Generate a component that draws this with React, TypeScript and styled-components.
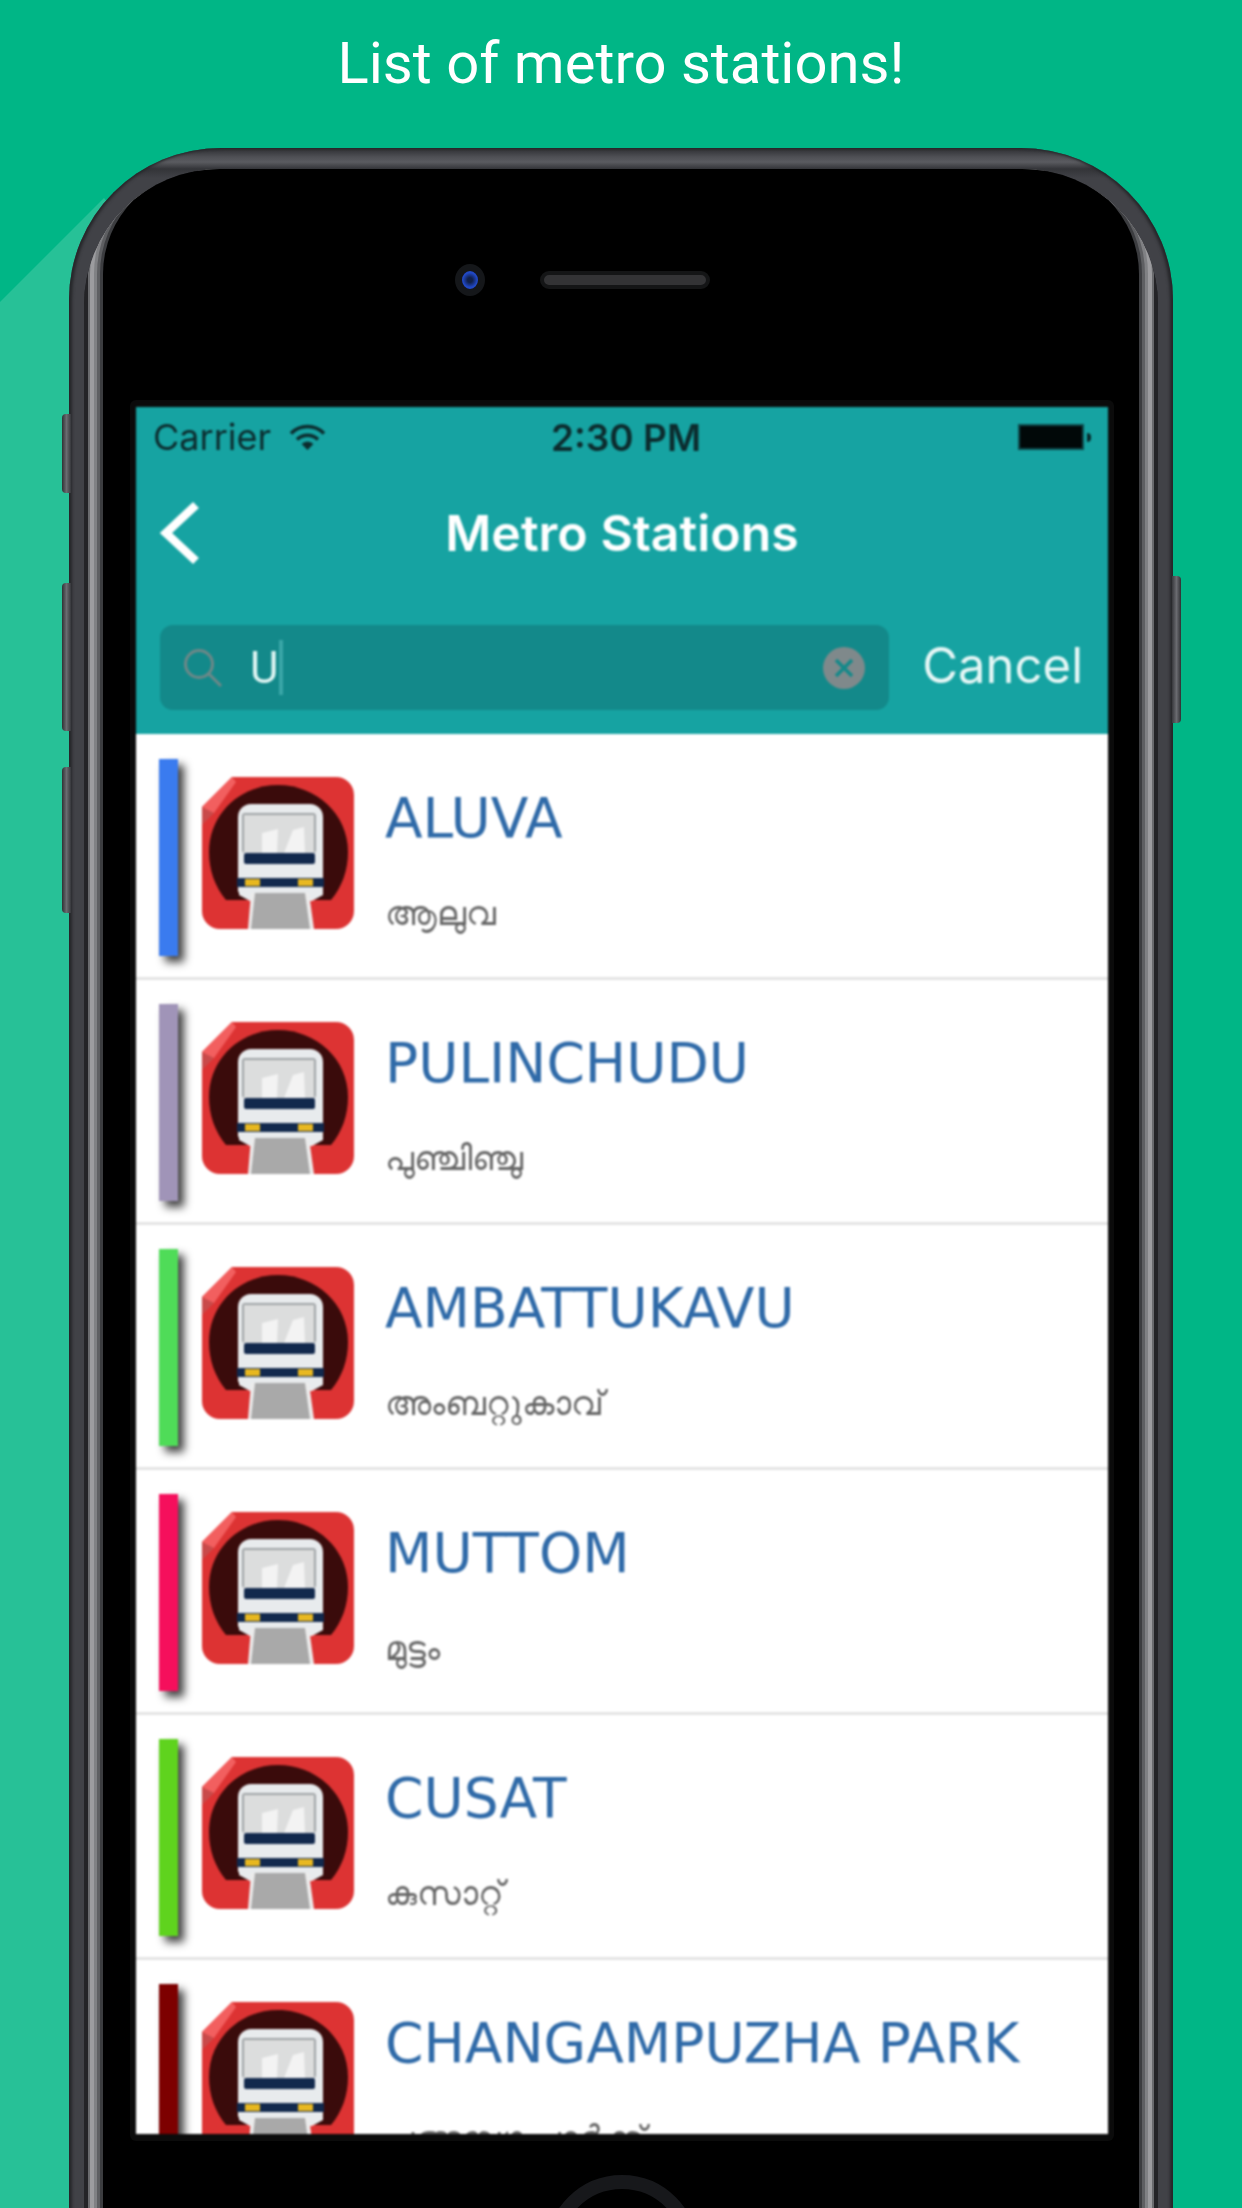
import * as React from "react";
import styled, { createGlobalStyle } from "styled-components";

const stations = [
  { name: "ALUVA", local: "ആലുവ", color: "#3a7bef" },
  { name: "PULINCHUDU", local: "പുഞ്ചിഞ്ചു", color: "#a094b8" },
  { name: "AMBATTUKAVU", local: "അംബറ്റുകാവ്", color: "#4fdc58" },
  { name: "MUTTOM", local: "മുട്ടം", color: "#f50f5c" },
  { name: "CUSAT", local: "കുസാറ്റ്", color: "#5fd31e" },
  { name: "CHANGAMPUZHA PARK", local: "ചങ്ങമ്പുഴ പാർക്ക്", color: "#7d0000" },
];

function MetroIcon() {
  return (
    <IconSvg viewBox="0 0 152 152">
      <path d="M30 0H134a18 18 0 0 1 18 18V134a18 18 0 0 1-18 18H18a18 18 0 0 1-18-18V30Z" fill="#dd3333" />
      <path d="M0 30 30 0 34 5 12 36 0 36Z" fill="#f25f5f" />
      <path d="M0 30 12 36 0 48Z" fill="#c94a4a" />
      <path d="M24 123C13 110 7 93 7 75 7 37 38 8 76 8s70 29 70 67c0 18-6 35-17 48Z" fill="#3a0b0b" />
      <path d="M36 40a13 13 0 0 1 13-13H108a13 13 0 0 1 13 13V115H36Z" fill="#e8ebed" />
      <rect x="40" y="36" width="74" height="40" rx="3" fill="#9fa3a5" />
      <rect x="42" y="38" width="70" height="38" fill="#dcdddd" />
      <path d="M60 56 76 52 75 76 60 76ZM82 76 91 53 102 50 103 76Z" fill="#f3f3f3" />
      <rect x="42" y="76" width="71" height="11" rx="2" fill="#12294d" />
      <rect x="35" y="101" width="87" height="9" fill="#12294d" />
      <rect x="43" y="102" width="15" height="7" fill="#e8b820" />
      <rect x="96" y="102" width="15" height="7" fill="#e8b820" />
      <path d="M37 111H121V118L110 124H48L37 118Z" fill="#e8ebed" />
      <path d="M49 116H107L112 152H46Z" fill="#ececec" />
      <path d="M53 116H103L108 152H49Z" fill="#a9a9a9" />
    </IconSvg>
  );
}

export default function App() {
  return (
    <Page>
      <GlobalStyle />
      <Wedge />
      <Caption>List of metro stations!</Caption>
      <Shell>
        <SideKey $top={266} $height={79} />
        <SideKey $top={435} $height={148} />
        <SideKey $top={619} $height={146} />
        <PowerKey />
        <Bezel>
          <Face>
            <Sensors>
              <Camera />
              <Speaker />
            </Sensors>
            <ScreenFrame>
              <Screen>
                <TealHeader>
                  <StatusBar>
                    <StatusLeft>
                      <span>Carrier</span>
                      <svg width="37" height="28" viewBox="0 0 37 28" fill="none" stroke="#0c2c2e" strokeWidth="3.6">
                        <path d="M2 10.5a23 23 0 0 1 33 0" />
                        <path d="M8 16.5a15 15 0 0 1 21 0" />
                        <path d="M18.5 27 12.6 21a8.2 8.2 0 0 1 11.8 0Z" fill="#0c2c2e" stroke="none" />
                      </svg>
                    </StatusLeft>
                    <StatusTime>2:30 PM</StatusTime>
                    <Battery />
                  </StatusBar>
                  <NavBar>
                    <BackIcon viewBox="0 0 42 64" fill="none" stroke="#fff" strokeWidth="8.5">
                      <path d="M37 4 7 32 37 60" />
                    </BackIcon>
                    <NavTitle>Metro Stations</NavTitle>
                  </NavBar>
                  <SearchRow>
                    <SearchField>
                      <svg width="40" height="40" viewBox="0 0 40 40" fill="none" stroke="#6f8888" strokeWidth="3">
                        <circle cx="16" cy="16" r="13.5" />
                        <path d="M26 26 38 38" />
                      </svg>
                      <SearchValue>U</SearchValue>
                      <Caret />
                      <ClearIcon viewBox="0 0 42 42">
                        <circle cx="21" cy="21" r="21" fill="#7f898b" />
                        <path d="M13 13 29 29M29 13 13 29" stroke="#13898a" strokeWidth="3.5" />
                      </ClearIcon>
                    </SearchField>
                    <CancelLabel>Cancel</CancelLabel>
                  </SearchRow>
                </TealHeader>
                <RowList>
                  {stations.map((s) => (
                    <Row key={s.name}>
                      <LineBar $color={s.color} />
                      <MetroIcon />
                      <RowText>
                        <StationName>{s.name}</StationName>
                        <LocalName lang="ml">{s.local}</LocalName>
                      </RowText>
                    </Row>
                  ))}
                </RowList>
              </Screen>
            </ScreenFrame>
            <HomeButton />
          </Face>
        </Bezel>
      </Shell>
    </Page>
  );
}

const GlobalStyle = createGlobalStyle`
  html, body { margin: 0; padding: 0; background: #00b686; }
`;

const Page = styled.div`
  position: relative;
  width: 1242px;
  height: 2208px;
  overflow: hidden;
  background: #00b686;
  font-family: Roboto, sans-serif;
`;

const Wedge = styled.div`
  position: absolute;
  left: 0;
  top: 0;
  width: 220px;
  height: 2208px;
  background: #27c197;
  clip-path: polygon(0 302px, 104px 198px, 200px 320px, 200px 2208px, 0 2208px);
`;

const Caption = styled.div`
  position: relative;
  height: 148px;
  padding-top: 32px;
  box-sizing: border-box;
  text-align: center;
  color: #fff;
  font: 400 58px/62px Roboto, sans-serif;
`;

const Shell = styled.div`
  position: relative;
  width: 1104px;
  height: 2200px;
  margin: 0 auto;
  box-sizing: border-box;
  padding: 21px 15px 0;
  border-radius: 152px 152px 0 0;
  background: linear-gradient(#2c2d31 0, #4f5055 9px, #5a5b60 14px, #333438 21px, #414247 30px);
  box-shadow: inset 3px 0 3px #26272a, inset -3px 0 3px #26272a;
`;

const SideKey = styled.div<{ $top: number; $height: number }>`
  position: absolute;
  left: -7px;
  top: ${(p) => p.$top}px;
  width: 9px;
  height: ${(p) => p.$height}px;
  border-radius: 4px 0 0 4px;
  background: linear-gradient(90deg, #2f3034, #6a6b70 50%, #37383c);
`;

const PowerKey = styled.div`
  position: absolute;
  right: -8px;
  top: 428px;
  width: 9px;
  height: 147px;
  border-radius: 0 4px 4px 0;
  background: linear-gradient(270deg, #2f3034, #6a6b70 50%, #37383c);
`;

const Bezel = styled.div`
  height: 100%;
  overflow: hidden;
  padding: 0 19px;
  border-radius: 136px 136px 0 0;
  background: #242427;
`;

const Face = styled.div`
  height: 100%;
  box-sizing: border-box;
  padding: 94px 25px 0 27px;
  border-radius: 105px 105px 0 0;
  background: #000;
  box-shadow: 0 0 0 3px #3c3d40, 0 0 0 6px #5e5f62, 0 0 0 9px #808184, 0 0 0 13px #9c9c9f,
    0 0 0 15px #6a6b6e, 0 0 0 19px #242427;
`;

const Sensors = styled.div`
  display: flex;
  align-items: center;
  justify-content: center;
  gap: 55px;
  height: 34px;
  padding-right: 80px;
  margin-bottom: 103px;
`;

const Camera = styled.div`
  width: 30px;
  height: 32px;
  box-sizing: border-box;
  border-radius: 50%;
  border: 7px solid #15171a;
  background: radial-gradient(circle, #10204a 20%, #2148c4 60%);
`;

const Speaker = styled.div`
  width: 170px;
  height: 18px;
  box-sizing: border-box;
  border-radius: 9px;
  border: 4px solid #141516;
  background: #333335;
`;

const ScreenFrame = styled.div`
  padding: 7px 6px;
  border-radius: 6px;
  background: #0b0b0b;
`;

const Screen = styled.div`
  height: 1727px;
  overflow: hidden;
  background: #fff;
  filter: blur(1px);
`;

const TealHeader = styled.div`
  height: 327px;
  box-sizing: border-box;
  background: #16a3a2;
`;

const StatusBar = styled.div`
  display: grid;
  grid-template-columns: 1fr auto 1fr;
  align-items: center;
  height: 60px;
  padding: 0 17px;
  color: #0c2c2e;
  font: 400 36px/1 Inter, sans-serif;
`;

const StatusLeft = styled.div`
  display: flex;
  align-items: center;
  gap: 18px;
`;

const StatusTime = styled.div`
  margin-left: 8px;
  font-size: 37px;
  font-weight: 600;
`;

const Battery = styled.div`
  position: relative;
  justify-self: end;
  width: 62px;
  height: 22px;
  margin-right: 9px;
  background: #010808;
  box-shadow: 0 0 0 2px #0d4a4c;
  &::after {
    content: "";
    position: absolute;
    right: -9px;
    top: 7px;
    width: 4px;
    height: 9px;
    border-radius: 0 4px 4px 0;
    background: #06282a;
  }
`;

const NavBar = styled.div`
  position: relative;
  display: flex;
  align-items: center;
  justify-content: center;
  height: 130px;
`;

const BackIcon = styled.svg`
  position: absolute;
  left: 23px;
  top: 34px;
  width: 42px;
  height: 64px;
`;

const NavTitle = styled.div`
  margin-top: 2px;
  color: #fff;
  font: 600 50px/1 Inter, sans-serif;
`;

const SearchRow = styled.div`
  display: flex;
  align-items: center;
  height: 85px;
  margin-top: 28px;
  padding: 0 25px 0 24px;
`;

const SearchField = styled.div`
  display: flex;
  align-items: center;
  width: 729px;
  height: 85px;
  box-sizing: border-box;
  padding: 0 24px 0 23px;
  border-radius: 13px;
  background: #13898a;
`;

const SearchValue = styled.div`
  margin-left: 27px;
  color: #dff5f3;
  font: 400 44px/1 Roboto, sans-serif;
`;

const Caret = styled.div`
  width: 4px;
  height: 55px;
  background: #3aa6a8;
`;

const ClearIcon = styled.svg`
  width: 42px;
  height: 42px;
  margin-left: auto;
`;

const CancelLabel = styled.div`
  margin: 0 0 5px auto;
  color: #e6f7f6;
  font: 400 49px/1 Inter, sans-serif;
`;

const RowList = styled.div`
  padding-top: 1px;
`;

const Row = styled.div`
  display: flex;
  align-items: flex-start;
  height: 245px;
  box-sizing: border-box;
  padding-left: 23px;
  border-bottom: 3px solid #e4e4e4;
`;

const LineBar = styled.div<{ $color: string }>`
  flex: none;
  width: 19px;
  height: 197px;
  margin-top: 24px;
  background: ${(p) => p.$color};
  box-shadow: 6px 6px 8px rgba(0, 0, 0, 0.75);
`;

const IconSvg = styled.svg`
  flex: none;
  width: 152px;
  height: 152px;
  margin: 42px 0 0 24px;
`;

const RowText = styled.div`
  display: flex;
  flex-direction: column;
  margin-left: 31px;
`;

const StationName = styled.div`
  margin-top: 52px;
  color: #2f6aa8;
  white-space: nowrap;
  font: 400 55px/62px "DejaVu Sans", sans-serif;
`;

const LocalName = styled.div`
  margin-top: 43px;
  color: #666;
  white-space: nowrap;
  font: 400 34px/40px "Noto Sans", "DejaVu Sans", sans-serif;
`;

const HomeButton = styled.div`
  width: 152px;
  height: 152px;
  box-sizing: border-box;
  margin: 34px auto 0;
  border-radius: 50%;
  border: 14px solid #17181b;
`;
